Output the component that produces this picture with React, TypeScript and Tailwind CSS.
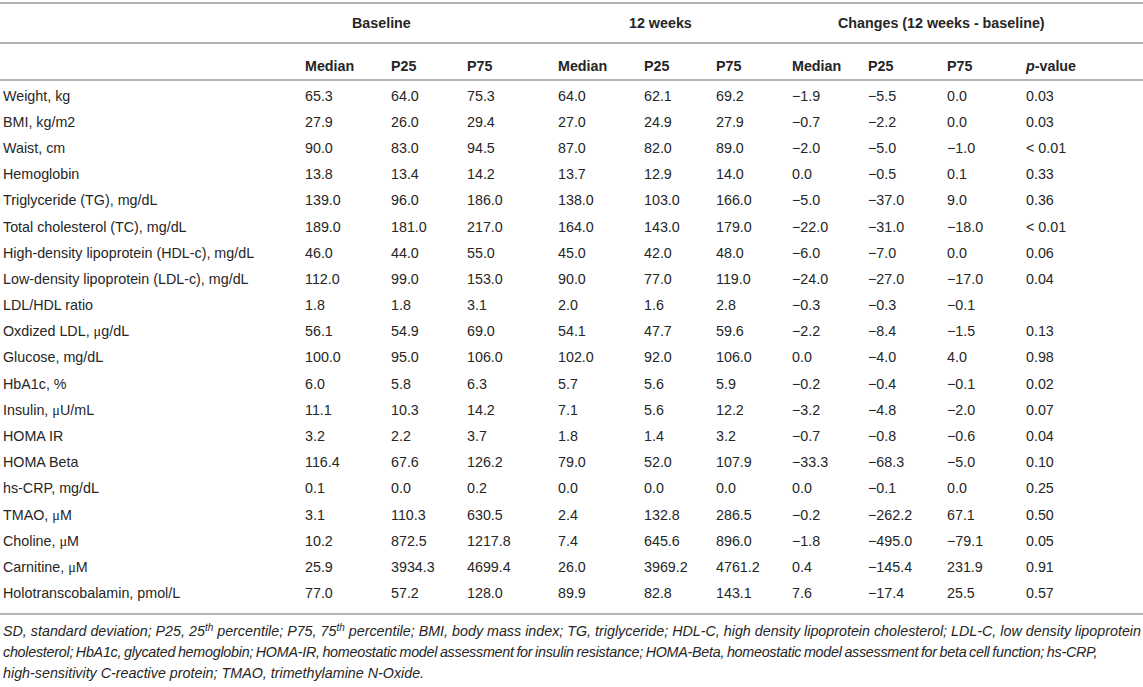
const cols = 'grid grid-cols-[302px_86px_76px_91px_86px_72px_76px_76px_79px_79px_1fr] pl-[3px]'

const M = '\u2212'

const rows: string[][] = [
  ['Weight, kg', '65.3', '64.0', '75.3', '64.0', '62.1', '69.2', M + '1.9', M + '5.5', '0.0', '0.03'],
  ['BMI, kg/m2', '27.9', '26.0', '29.4', '27.0', '24.9', '27.9', M + '0.7', M + '2.2', '0.0', '0.03'],
  ['Waist, cm', '90.0', '83.0', '94.5', '87.0', '82.0', '89.0', M + '2.0', M + '5.0', M + '1.0', '< 0.01'],
  ['Hemoglobin', '13.8', '13.4', '14.2', '13.7', '12.9', '14.0', '0.0', M + '0.5', '0.1', '0.33'],
  ['Triglyceride (TG), mg/dL', '139.0', '96.0', '186.0', '138.0', '103.0', '166.0', M + '5.0', M + '37.0', '9.0', '0.36'],
  ['Total cholesterol (TC), mg/dL', '189.0', '181.0', '217.0', '164.0', '143.0', '179.0', M + '22.0', M + '31.0', M + '18.0', '< 0.01'],
  ['High-density lipoprotein (HDL-c), mg/dL', '46.0', '44.0', '55.0', '45.0', '42.0', '48.0', M + '6.0', M + '7.0', '0.0', '0.06'],
  ['Low-density lipoprotein (LDL-c), mg/dL', '112.0', '99.0', '153.0', '90.0', '77.0', '119.0', M + '24.0', M + '27.0', M + '17.0', '0.04'],
  ['LDL/HDL ratio', '1.8', '1.8', '3.1', '2.0', '1.6', '2.8', M + '0.3', M + '0.3', M + '0.1', ''],
  ['Oxdized LDL, |g/dL', '56.1', '54.9', '69.0', '54.1', '47.7', '59.6', M + '2.2', M + '8.4', M + '1.5', '0.13'],
  ['Glucose, mg/dL', '100.0', '95.0', '106.0', '102.0', '92.0', '106.0', '0.0', M + '4.0', '4.0', '0.98'],
  ['HbA1c, %', '6.0', '5.8', '6.3', '5.7', '5.6', '5.9', M + '0.2', M + '0.4', M + '0.1', '0.02'],
  ['Insulin, |U/mL', '11.1', '10.3', '14.2', '7.1', '5.6', '12.2', M + '3.2', M + '4.8', M + '2.0', '0.07'],
  ['HOMA IR', '3.2', '2.2', '3.7', '1.8', '1.4', '3.2', M + '0.7', M + '0.8', M + '0.6', '0.04'],
  ['HOMA Beta', '116.4', '67.6', '126.2', '79.0', '52.0', '107.9', M + '33.3', M + '68.3', M + '5.0', '0.10'],
  ['hs-CRP, mg/dL', '0.1', '0.0', '0.2', '0.0', '0.0', '0.0', '0.0', M + '0.1', '0.0', '0.25'],
  ['TMAO, |M', '3.1', '110.3', '630.5', '2.4', '132.8', '286.5', M + '0.2', M + '262.2', '67.1', '0.50'],
  ['Choline, |M', '10.2', '872.5', '1217.8', '7.4', '645.6', '896.0', M + '1.8', M + '495.0', M + '79.1', '0.05'],
  ['Carnitine, |M', '25.9', '3934.3', '4699.4', '26.0', '3969.2', '4761.2', '0.4', M + '145.4', '231.9', '0.91'],
  ['Holotranscobalamin, pmol/L', '77.0', '57.2', '128.0', '89.9', '82.8', '143.1', '7.6', M + '17.4', '25.5', '0.57'],
]

// "|" marks where the Greek mu goes
function Label({ text }: { text: string }) {
  const parts = text.split('|')
  if (parts.length === 1) return <>{text}</>
  return (
    <>
      {parts[0]}
      <span className="font-['Liberation_Serif',serif]">μ</span>
      {parts[1]}
    </>
  )
}

function Rule() {
  return <div className="h-[2px] bg-[#b4b4b4]" />
}

export default function App() {
  return (
    <div className="w-[1143px] h-[687px] overflow-hidden bg-white pt-[2px] text-[14.3px] leading-[17px] text-[#262626] font-['Liberation_Sans',Arial,sans-serif]">
      <Rule />
      <div className={`${cols} h-[38px] items-center font-bold`}>
        <div className="col-start-2 col-span-3 pl-[47px]">Baseline</div>
        <div className="col-start-5 col-span-3 pl-[71px]">12 weeks</div>
        <div className="col-start-8 col-span-4 pl-[46px]">Changes (12 weeks - baseline)</div>
      </div>
      <Rule />
      <div className={`${cols} h-[35px] items-end pb-[4px] font-bold`}>
        <div />
        <div>Median</div>
        <div>P25</div>
        <div>P75</div>
        <div>Median</div>
        <div>P25</div>
        <div>P75</div>
        <div>Median</div>
        <div>P25</div>
        <div>P75</div>
        <div>
          <span className="italic">p</span>-value
        </div>
      </div>
      <Rule />
      <div className="pt-[2px] pb-[6px]">
        {rows.map((r) => (
          <div key={r[0]} className={`${cols} h-[26.2px] items-center`}>
            <div className="whitespace-nowrap">
              <Label text={r[0]} />
            </div>
            {r.slice(1).map((v, i) => (
              <div key={i} className="whitespace-nowrap">
                {v}
              </div>
            ))}
          </div>
        ))}
      </div>
      <Rule />
      <div className="pt-[6px] pl-[3px] italic leading-[21px] whitespace-nowrap">
        <div>
          SD, standard deviation; P25, 25<sup className="text-[10px]">th</sup> percentile; P75, 75
          <sup className="text-[10px]">th</sup> percentile; BMI, body mass index; TG, triglyceride; HDL-C, high
          density lipoprotein cholesterol; LDL-C, low density lipoprotein
        </div>
        <div className="tracking-[-0.25px] [word-spacing:-1px]">
          cholesterol; HbA1c, glycated hemoglobin; HOMA-IR, homeostatic model assessment for insulin resistance;
          HOMA-Beta, homeostatic model assessment for beta cell function; hs-CRP,
        </div>
        <div>high-sensitivity C-reactive protein; TMAO, trimethylamine N-Oxide.</div>
      </div>
    </div>
  )
}
